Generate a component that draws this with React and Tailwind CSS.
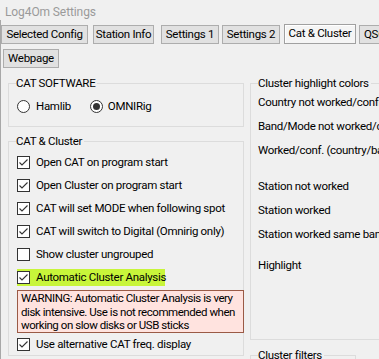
import React from "react"

const tabs = [
  { label: "Selected Config", cls: "ml-0 w-[87px]" },
  { label: "Station Info", cls: "ml-[5px] w-[61px]" },
  { label: "Settings 1", cls: "ml-[7px] w-[58px]" },
  { label: "Settings 2", cls: "ml-[3px] w-[58px]" },
]

function Check({ checked }) {
  return (
    <span className="w-[13px] h-[13px] shrink-0 border border-[#333] bg-white flex items-center justify-center">
      {checked && (
        <svg width="11" height="11" viewBox="0 0 11 11">
          <polyline points="1.5,5.5 4,8 9.5,2.5" fill="none" stroke="#333" strokeWidth="1.1" />
        </svg>
      )}
    </span>
  )
}

function Radio({ checked }) {
  return (
    <span className="w-[13px] h-[13px] shrink-0 rounded-full border border-[#333] bg-white flex items-center justify-center">
      {checked && <span className="w-[7px] h-[7px] rounded-full bg-[#333]" />}
    </span>
  )
}

function CheckRow({ label, checked = true }) {
  return (
    <div className="h-[23px] flex items-center pl-[8px] gap-[6px]">
      <Check checked={checked} />
      <span>{label}</span>
    </div>
  )
}

function Group({ title, className, children }) {
  return (
    <div className={"relative border border-[#dcdcdc] " + className}>
      <span className="absolute left-[7px] top-[-9px] leading-[16px] bg-[#f0f0f0] pr-[2px]">{title}</span>
      {children}
    </div>
  )
}

export default function App() {
  return (
    <div className="w-[379px] h-[359px] overflow-hidden bg-[#f0f0f0] text-[11.5px] tracking-[-0.3px] text-[#000] whitespace-nowrap font-['Roboto',sans-serif]">
      <div className="h-[20px] pl-[5px] pt-[4px] leading-[16px] text-[12px] tracking-[-0.1px] text-[#9a9a9a]">Log4Om Settings</div>
      <div className="h-[339px] border-l border-[#a8a8a8]">
        <div className="pt-[4px] flex items-end h-[24px]">
          {tabs.map((t) => (
            <div
              key={t.label}
              className={"h-[19px] shrink-0 border border-[#adadad] bg-[#e1e1e1] flex items-center justify-center " + t.cls}
            >
              {t.label}
            </div>
          ))}
          <div className="ml-[4px] w-[72px] h-[20px] shrink-0 border border-[#a0a0a0] bg-[#f5f5f5] shadow-[inset_1px_1px_0_#fff] flex items-center justify-center">
            Cat &amp; Cluster
          </div>
          <div className="ml-[3px] w-[60px] h-[19px] shrink-0 border border-[#adadad] bg-[#e1e1e1] flex items-center pl-[4px]">
            QSO
          </div>
        </div>
        <div className="mt-[5px] ml-[2px] w-[56px] h-[19px] border border-[#adadad] bg-[#e1e1e1] flex items-center justify-center">
          Webpage
        </div>
        <div className="flex pl-[7px] gap-[6px]">
          <div className="w-[236px] shrink-0 pt-[15px]">
            <Group title="CAT SOFTWARE" className="h-[44px]">
              <div className="flex items-center pl-[8px] pt-[14px]">
                <Radio />
                <span className="ml-[6px]">Hamlib</span>
                <span className="ml-[19px]"><Radio checked /></span>
                <span className="ml-[5px]">OMNIRig</span>
              </div>
            </Group>
            <Group title="CAT & Cluster" className="mt-[14px] h-[215px]">
              <div className="pt-[9px]">
                <CheckRow label="Open CAT on program start" />
                <CheckRow label="Open Cluster on program start" />
                <CheckRow label="CAT will set MODE when following spot" />
                <CheckRow label="CAT will switch to Digital (Omnirig only)" />
                <CheckRow label="Show cluster ungrouped" checked={false} />
                <div className="h-[23px] flex items-center pl-[8px]">
                  <div className="h-[17px] w-[148px] bg-[#c8f53a] flex items-center gap-[6px]">
                    <Check checked />
                    <span>Automatic Cluster Analysis</span>
                  </div>
                </div>
                <div className="ml-[8px] mt-[1px] w-[227px] h-[43px] border border-[#9a5a46] bg-[#ffe3df] pl-[3px] pr-0 pt-[1px] leading-[13.5px] tracking-[-0.45px] whitespace-normal">
                  WARNING: Automatic Cluster Analysis is very disk intensive. Use is not recommended when working on slow disks or USB sticks
                </div>
                <CheckRow label="Use alternative CAT freq. display" />
              </div>
            </Group>
          </div>
          <div className="flex-1 min-w-0 pt-[15px]">
            <Group title="Cluster highlight colors" className="h-[257px] border-r-0">
              <div className="pt-[7px] pl-[7px]">
                <div className="h-[24px] flex items-center">Country not worked/confirmed</div>
                <div className="h-[24px] flex items-center">Band/Mode not worked/confirmed</div>
                <div className="h-[24px] flex items-center">Worked/conf. (country/band)</div>
                <div className="h-[12px]" />
                <div className="h-[24px] flex items-center">Station not worked</div>
                <div className="h-[24px] flex items-center">Station worked</div>
                <div className="h-[24px] flex items-center">Station worked same band</div>
                <div className="h-[7px]" />
                <div className="h-[24px] flex items-center">Highlight</div>
              </div>
            </Group>
            <Group title="Cluster filters" className="mt-[15px] w-[106px] h-[60px]" />
          </div>
        </div>
      </div>
    </div>
  )
}
